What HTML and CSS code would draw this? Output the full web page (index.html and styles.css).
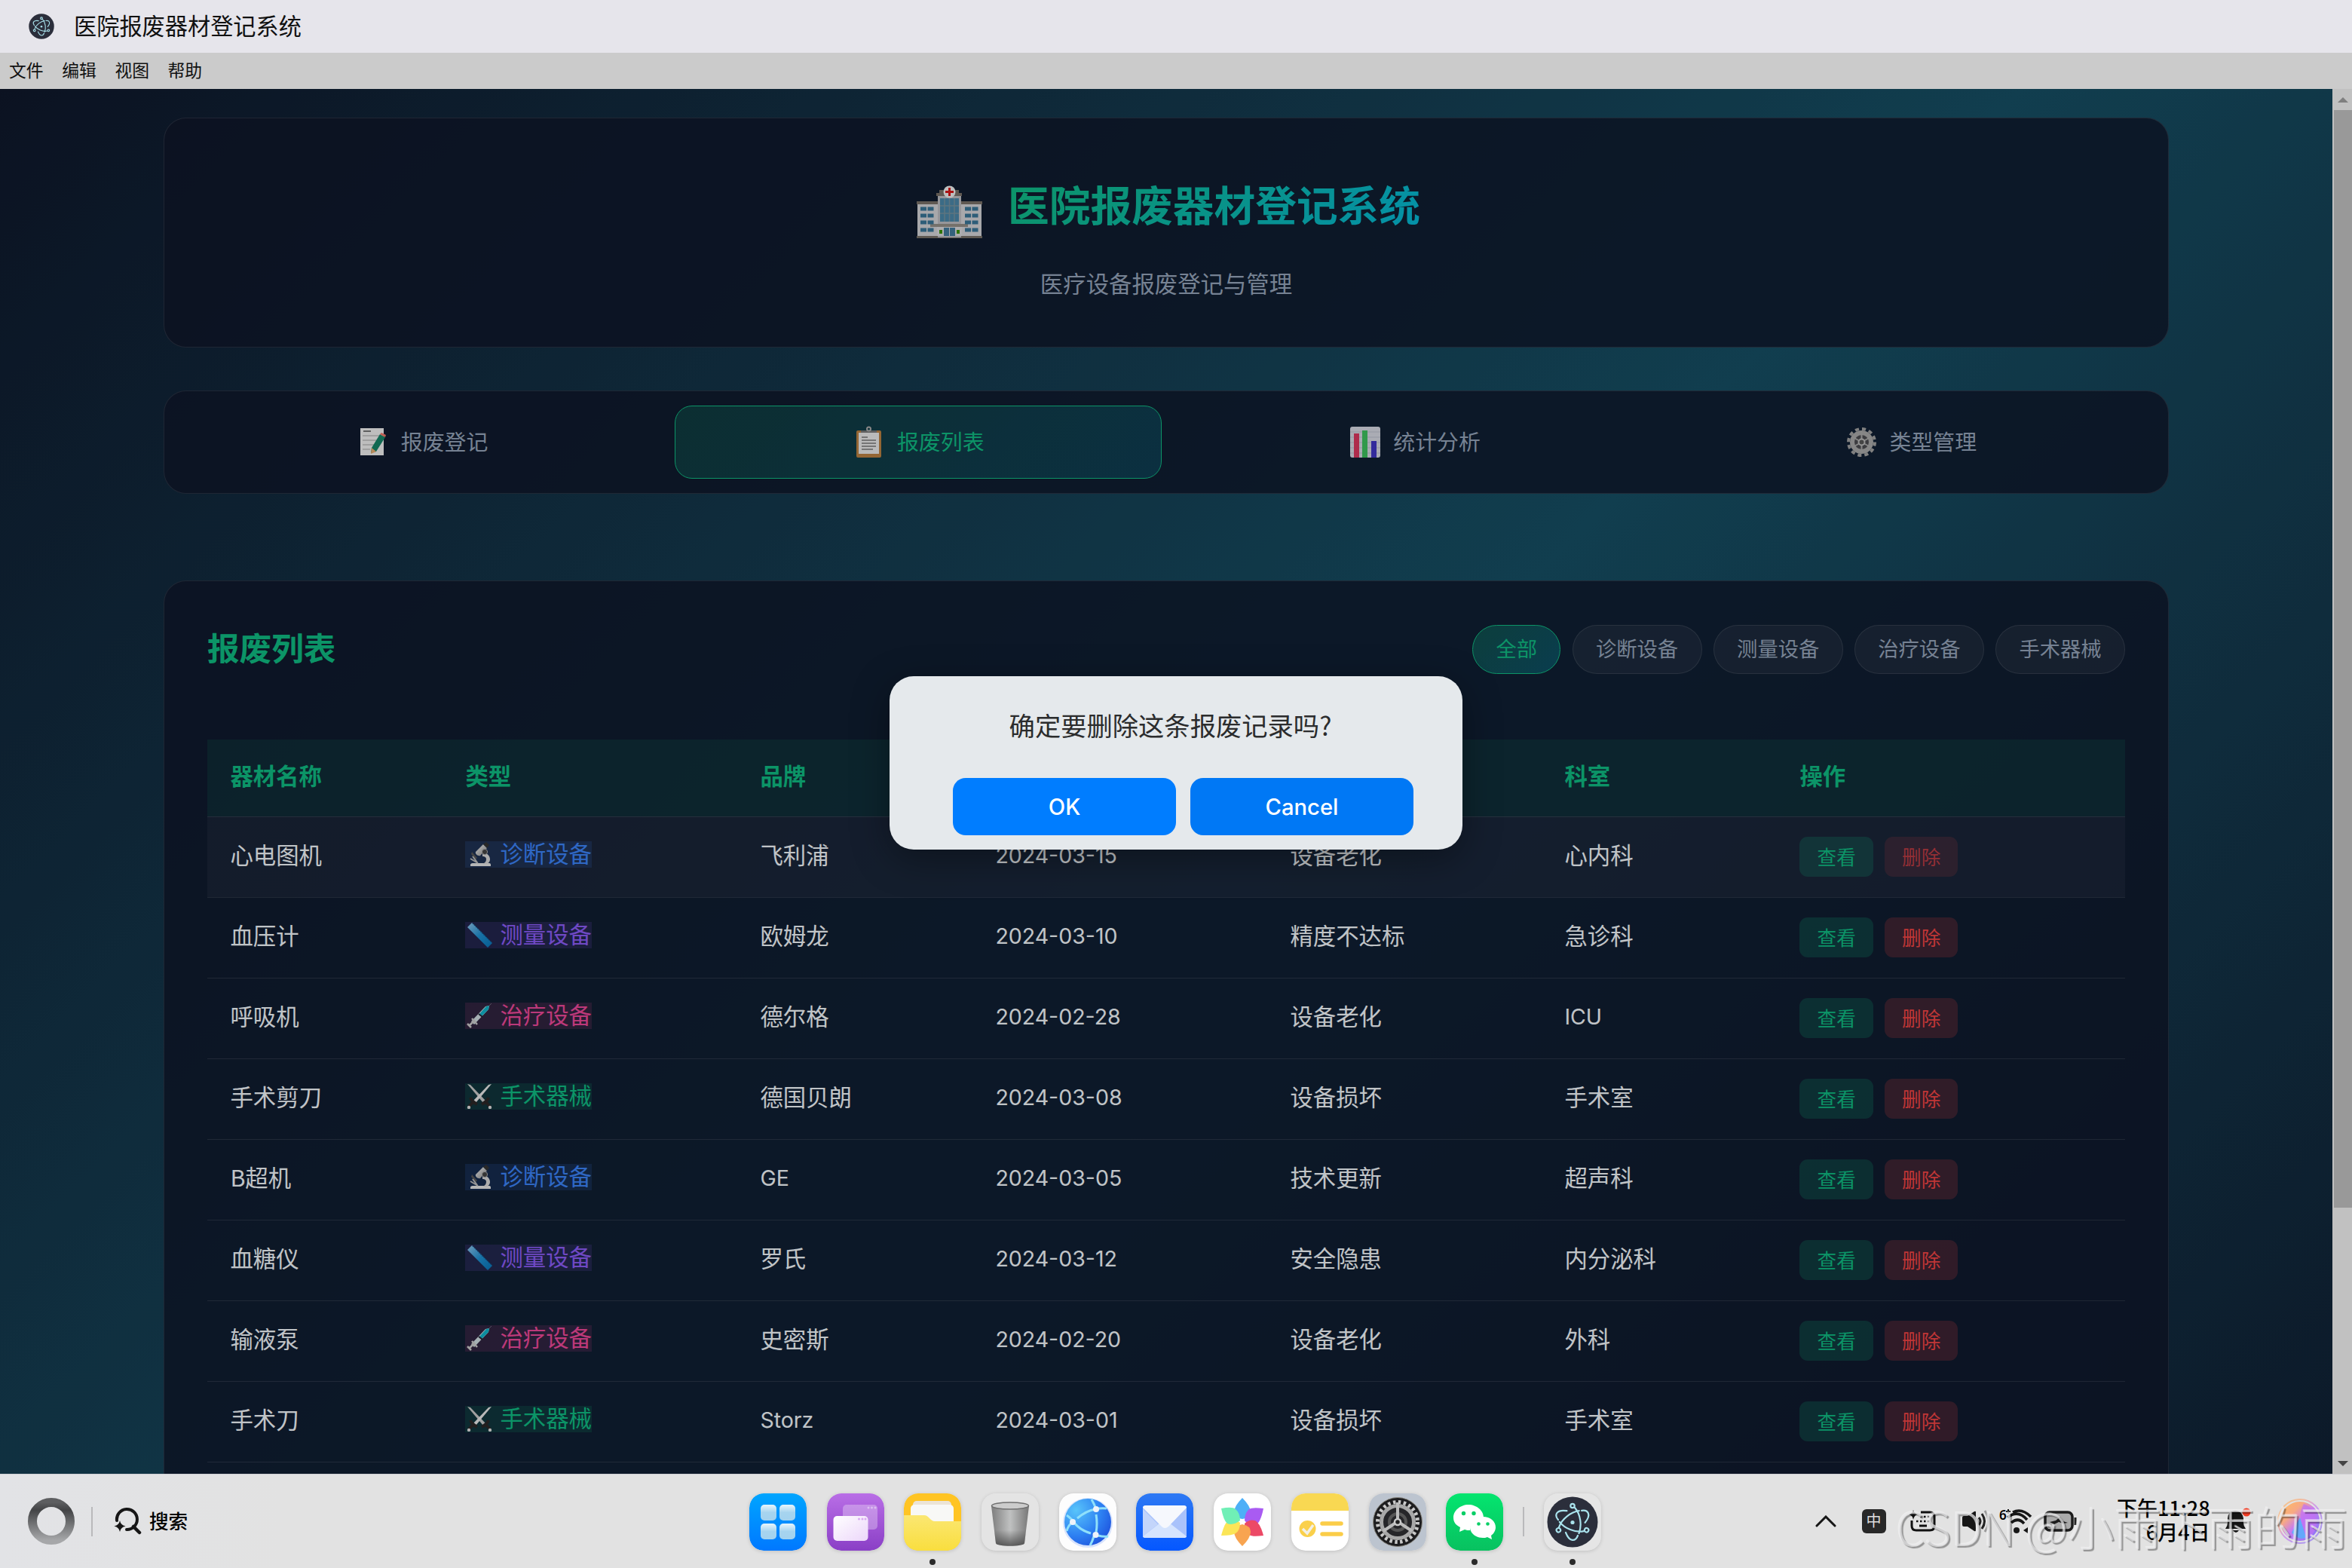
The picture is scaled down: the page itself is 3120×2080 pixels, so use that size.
FILE: index.html
```html
<!DOCTYPE html>
<html lang="zh-CN">
<head>
  <meta charset="UTF-8">
  <title>医院报废器材登记系统</title>
  <link rel="stylesheet" href="styles.css">
</head>
<body>
  <!-- shared icons -->
  <svg class="sprite" width="0" height="0">
    <defs>
      <linearGradient id="g-metal" x1="0" y1="0" x2="1" y2="1"><stop offset="0" stop-color="#f4f4f4"/><stop offset="1" stop-color="#8d8d8d"/></linearGradient>
      <linearGradient id="g-ruler" x1="0" y1="0" x2="1" y2="1"><stop offset="0" stop-color="#8fc4ea"/><stop offset=".5" stop-color="#1f8fd0"/><stop offset="1" stop-color="#0873b5"/></linearGradient>
    </defs>
    <symbol id="i-scope" viewBox="0 0 34 34">
      <path d="M5 33h27v-2c0-1.500-1-2-3-2H8c-2 0-3 1-3 2z" fill="#e4e4e4"/>
      <path d="M21 15c6 0 10 4 10 9 0 3-2 5-4 6h-6c3-1 5-3 5-6s-2-4-5-4z" fill="#d8d8d8"/>
      <path d="M12 14l10-10 5 5-9 10c-3 1-7-2-6-5z" fill="url(#g-metal)"/>
      <path d="M22 4l4-3 4 4-3 4z" fill="#333"/>
      <circle cx="24" cy="14" r="3.600" fill="#444" stroke="#aaa"/>
      <path d="M7 14l7 8-2 2-6-7z" fill="#555"/><path d="M5 23l10 6M8 20l6 8" stroke="#bbb" stroke-width="2"/>
    </symbol>
    <symbol id="i-ruler" viewBox="0 0 34 34">
      <path d="M1 7l6-6 27 27-6 6z" fill="url(#g-ruler)"/>
      <path d="M8 2l25 25" stroke="#0a4d80" stroke-width="1.500" stroke-dasharray="1 2"/>
    </symbol>
    <symbol id="i-syringe" viewBox="0 0 34 34">
      <path d="M27 7l6-6" stroke="#667" stroke-width="1"/>
      <path d="M6 25L25 5l5-1-1 5L10 29z" fill="#cfdde0"/>
      <path d="M17 15L26 5l4-1-1 5-9 9z" fill="#10b2c8"/>
      <path d="M16 15l5 4" stroke="#223" stroke-width="2"/>
      <path d="M7 21l7 8M1 28l5 5M4 30l7-7" stroke="#c8c8c8" stroke-width="2.500"/>
    </symbol>
    <symbol id="i-swords" viewBox="0 0 34 34">
      <path d="M1 1l4 1 20 21-3 3z" fill="#c8c8c8"/><path d="M33 1l-4 1L9 23l3 3z" fill="#e6e6e6"/>
      <path d="M20 28c2-1 8-5 9-9M24 23l7 8M14 28c-2-1-8-5-9-9M10 23l-7 8" fill="none" stroke="#2b2626" stroke-width="4"/>
      <circle cx="3" cy="32" r="2.200" fill="#ddd"/><circle cx="31" cy="32" r="2.200" fill="#ddd"/>
    </symbol>
    <symbol id="i-electron" viewBox="0 0 76 76">
      <circle cx="38" cy="38" r="33.500" fill="#2b2e3b"/>
      <g fill="none" stroke="#a9e2ec" stroke-width="2.200" stroke-linecap="round">
        <g id="orbit"><circle cx="38" cy="16.500" r="2.700"/><path d="M41 19C49 28 50.500 43 46.500 53M45 56c-3 8-11 9-16-4"/></g>
        <use href="#orbit" transform="rotate(120 38 38)"/><use href="#orbit" transform="rotate(240 38 38)"/>
      </g>
      <circle cx="38" cy="38.500" r="2.600" fill="#a9e2ec"/>
    </symbol>
  </svg>

  <header class="titlebar">
    <svg class="title-icon"><use href="#i-electron"/></svg>
    <span>医院报废器材登记系统</span>
  </header>
  <nav class="menubar"><span>文件</span><span>编辑</span><span>视图</span><span>帮助</span></nav>

  <div class="window">
    <div class="viewport">
      <div class="page">
        <div class="container">
          <section class="card hero">
            <div class="hero-title">
              <svg class="hospital" viewBox="0 0 98 70">
                <path d="M7 23h27v46H7zM65 23h27v46H65z" fill="#d3d3d6"/>
                <path d="M6 21h28v4H6zM65 21h28v4H65zM6 67h87v3H6z" fill="#777067"/>
                <path d="M34 13h31v56H34z" fill="#bcbcc1"/><path d="M32 10h34v4H32zM36 6h26v4H36z" fill="#776e66"/>
                <path d="M37 17h25v31H37z" fill="#4a86a8"/><path d="M43 17v31M49.500 17v31M56 17v31M37 27h25M37 37h25" stroke="#75929f" stroke-width="1.500"/>
                <path d="M24 51h50v4H24z" fill="#938e86"/><path d="M33 55h33v12H33z" fill="#d9d9db"/>
                <path d="M42 56h7v11h-7zM50 56h7v11h-7z" fill="#417b9d"/>
                <path d="M36 59h4v5h-4zM59 59h4v5h-4z" fill="#3a930a"/>
                <g stroke="#397597" stroke-width="5"><path d="M11 31h8M20.500 31h8M11 40h8M20.500 40h8M11 49h8M20.500 49h8M11 59h8M20.500 59h8"/><path d="M70 31h8M79.500 31h8M70 40h8M79.500 40h8M70 49h8M79.500 49h8M70 59h8M79.500 59h8"/></g>
                <circle cx="49.500" cy="8.500" r="8" fill="#eee"/><path d="M49.500 3v11M44 8.500h11" stroke="#d81818" stroke-width="3"/>
              </svg>
              <h1>医院报废器材登记系统</h1>
            </div>
            <p>医疗设备报废登记与管理</p>
          </section>

          <nav class="card tabs">
            <a class="tab">
              <svg viewBox="0 0 43 43"><path d="M5 3h31v36H5z" fill="#eee"/><path d="M9 7h10" stroke="#777" stroke-width="2"/><path d="M8 13h24M8 19h22M8 25h20M8 31h10" stroke="#bcbcbc" stroke-width="1.500"/><path d="M31 11l7 4-12 19-7 2 1-7z" fill="#168467"/><path d="M31 11l2-2 6 3-1 3z" fill="#ef7668"/><path d="M20 29l6 5-7 3z" fill="#e5aa6e"/></svg>
              <span>报废登记</span>
            </a>
            <a class="tab active">
              <svg viewBox="0 0 43 43"><rect x="5" y="6" width="33" height="36" rx="2" fill="#b98042"/><path d="M8 9h27v28H8z" fill="#e9e9e9"/><path d="M11 9h21V6H11z" fill="#777"/><circle cx="21.500" cy="4" r="2.500" fill="none" stroke="#aaa" stroke-width="2"/><path d="M12 15h8M12 19h19M12 23h19M12 27h19M12 31h15" stroke="#777" stroke-width="1.600"/></svg>
              <span>报废列表</span>
            </a>
            <a class="tab">
              <svg viewBox="0 0 43 43"><rect x="2" y="1" width="40" height="41" rx="3" fill="#d5d8e2"/><path d="M2 8h40M2 15h40M2 22h40M2 29h40M2 36h40" stroke="#b9bdcb"/><path d="M7 10h7v32H7z" fill="#da375f"/><path d="M18 6h7v36h-7z" fill="#3ec05e"/><path d="M30 20h7v22h-7z" fill="#4036c4"/></svg>
              <span>统计分析</span>
            </a>
            <a class="tab">
              <svg viewBox="0 0 43 43"><circle cx="21.500" cy="21.500" r="17.500" fill="none" stroke="#a0a0a0" stroke-width="4" stroke-dasharray="5.100 4.060"/><circle cx="21.500" cy="21.500" r="12.500" fill="#4c4c50" stroke="#a8a8a8" stroke-width="6"/><path d="M21.500 9v25M10 15l23 13M33 15L10 28" stroke="#aaa" stroke-width="2"/><circle cx="21.500" cy="21.500" r="4" fill="#555" stroke="#bbb" stroke-width="2"/></svg>
              <span>类型管理</span>
            </a>
          </nav>

          <section class="card list">
            <div class="list-head">
              <h2>报废列表</h2>
              <div class="filters">
                <button class="filter on">全部</button>
                <button class="filter">诊断设备</button>
                <button class="filter">测量设备</button>
                <button class="filter">治疗设备</button>
                <button class="filter">手术器械</button>
              </div>
            </div>
            <table>
              <colgroup><col class="c1"><col class="c2"><col class="c1"><col class="c2"><col class="c3"><col class="c1"><col></colgroup>
              <thead>
                <tr><th>器材名称</th><th>类型</th><th>品牌</th><th>报废日期</th><th>报废原因</th><th>科室</th><th>操作</th></tr>
              </thead>
              <tbody>
                <tr class="hover"><td>心电图机</td><td><span class="tag diag"><svg><use href="#i-scope"/></svg>诊断设备</span></td><td>飞利浦</td><td class="en">2024-03-15</td><td>设备老化</td><td>心内科</td><td><div class="acts"><button class="view">查看</button><button class="del">删除</button></div></td></tr>
                <tr><td>血压计</td><td><span class="tag meas"><svg><use href="#i-ruler"/></svg>测量设备</span></td><td>欧姆龙</td><td class="en">2024-03-10</td><td>精度不达标</td><td>急诊科</td><td><div class="acts"><button class="view">查看</button><button class="del">删除</button></div></td></tr>
                <tr><td>呼吸机</td><td><span class="tag cure"><svg><use href="#i-syringe"/></svg>治疗设备</span></td><td>德尔格</td><td class="en">2024-02-28</td><td>设备老化</td><td class="en">ICU</td><td><div class="acts"><button class="view">查看</button><button class="del">删除</button></div></td></tr>
                <tr><td>手术剪刀</td><td><span class="tag surg"><svg><use href="#i-swords"/></svg>手术器械</span></td><td>德国贝朗</td><td class="en">2024-03-08</td><td>设备损坏</td><td>手术室</td><td><div class="acts"><button class="view">查看</button><button class="del">删除</button></div></td></tr>
                <tr><td>B超机</td><td><span class="tag diag"><svg><use href="#i-scope"/></svg>诊断设备</span></td><td class="en">GE</td><td class="en">2024-03-05</td><td>技术更新</td><td>超声科</td><td><div class="acts"><button class="view">查看</button><button class="del">删除</button></div></td></tr>
                <tr><td>血糖仪</td><td><span class="tag meas"><svg><use href="#i-ruler"/></svg>测量设备</span></td><td>罗氏</td><td class="en">2024-03-12</td><td>安全隐患</td><td>内分泌科</td><td><div class="acts"><button class="view">查看</button><button class="del">删除</button></div></td></tr>
                <tr><td>输液泵</td><td><span class="tag cure"><svg><use href="#i-syringe"/></svg>治疗设备</span></td><td>史密斯</td><td class="en">2024-02-20</td><td>设备老化</td><td>外科</td><td><div class="acts"><button class="view">查看</button><button class="del">删除</button></div></td></tr>
                <tr><td>手术刀</td><td><span class="tag surg"><svg><use href="#i-swords"/></svg>手术器械</span></td><td class="en">Storz</td><td class="en">2024-03-01</td><td>设备损坏</td><td>手术室</td><td><div class="acts"><button class="view">查看</button><button class="del">删除</button></div></td></tr>
              </tbody>
            </table>
          </section>
        </div>
      </div>
      <div class="mask"></div>
    </div>
    <div class="scrollbar">
      <div class="arrow"><svg width="14" height="7"><path d="M7 0l7 7H0z" fill="#7f7f7f"/></svg></div>
      <div class="thumb"></div>
      <div class="arrow"><svg width="14" height="7"><path d="M7 7L0 0h14z" fill="#444"/></svg></div>
    </div>

    <div class="dialog">
      <p>确定要删除这条报废记录吗?</p>
      <div class="dialog-btns"><button>OK</button><button class="cancel">Cancel</button></div>
    </div>
  </div>

  <footer class="taskbar">
    <div class="start">
      <svg width="62" height="62" viewBox="0 0 62 62"><defs><linearGradient id="g-ring" x1="0" y1="0" x2="0" y2="1"><stop offset="0" stop-color="#5d5e60"/><stop offset=".2" stop-color="#434446"/><stop offset="1" stop-color="#a6a7a9"/></linearGradient></defs><circle cx="31" cy="31" r="25" fill="none" stroke="url(#g-ring)" stroke-width="12"/></svg>
      <i class="sep"></i>
      <svg class="search-icon" width="37" height="37" viewBox="0 0 37 37"><path d="M4 17A13.500 13.500 0 1 1 17 29" fill="none" stroke="#161616" stroke-width="4" stroke-linecap="round"/><path d="M26 25l8 8" stroke="#161616" stroke-width="4.500" stroke-linecap="round"/><path d="M8 17q1 6 7.500 7.500Q9 26 8 32 7 26 .5 24.500 7 23 8 17z" fill="#161616"/></svg>
      <span>搜索</span>
    </div>

    <div class="dock">
      <div class="app"><svg viewBox="0 0 76 76"><defs><linearGradient id="d1" x1="0" y1="0" x2="0" y2="1"><stop offset="0" stop-color="#00a5ff"/><stop offset="1" stop-color="#0078ff"/></linearGradient><linearGradient id="d1b" x1="0" y1="0" x2="0" y2="1"><stop offset="0" stop-color="#e8f5fc"/><stop offset=".5" stop-color="#a6d4ef"/><stop offset="1" stop-color="#a3d2ef"/></linearGradient></defs><rect width="76" height="76" rx="19" fill="url(#d1)"/><g fill="url(#d1b)"><rect x="15" y="15" width="21" height="21" rx="5"/><rect x="40" y="15" width="21" height="21" rx="5"/><rect x="15" y="40" width="21" height="21" rx="5"/><rect x="40" y="40" width="21" height="21" rx="5"/></g></svg></div>
      <div class="app"><svg viewBox="0 0 76 76"><defs><linearGradient id="d2" x1="0" y1="0" x2="0" y2="1"><stop offset="0" stop-color="#b96ee6"/><stop offset="1" stop-color="#8a3fc6"/></linearGradient><linearGradient id="d2b" x1="0" y1="0" x2="1" y2="1"><stop offset="0" stop-color="#fff"/><stop offset="1" stop-color="#ecd6fa"/></linearGradient></defs><rect width="76" height="76" rx="19" fill="url(#d2)"/><rect x="21" y="15" width="46" height="33" rx="5" fill="#fff" opacity=".3"/><g fill="#fff" opacity=".4"><circle cx="55" cy="19" r="1.500"/><circle cx="59.500" cy="19" r="1.500"/><circle cx="64" cy="19" r="1.500"/></g><rect x="8.500" y="30" width="46" height="33" rx="5" fill="url(#d2b)"/><g fill="#d9a8f2"><circle cx="42.500" cy="34" r="1.500"/><circle cx="47" cy="34" r="1.500"/><circle cx="51" cy="34" r="1.500"/></g></svg></div>
      <div class="app run"><svg viewBox="0 0 76 76"><defs><clipPath id="cf"><rect width="76" height="76" rx="19"/></clipPath><linearGradient id="d3" x1="0" y1="0" x2="0" y2="1"><stop offset="0" stop-color="#fbe772"/><stop offset="1" stop-color="#f9de3e"/></linearGradient></defs><g clip-path="url(#cf)"><path d="M0 0h76v76H0z" fill="#ffc423"/><rect x="12" y="10" width="51" height="20" rx="5" fill="#ece4d6"/><rect x="9" y="15" width="57" height="40" rx="5" fill="#f8f8f6"/><path d="M0 29h27c6 0 8 8 14 8h35v39H0z" fill="url(#d3)"/></g></svg></div>
      <div class="app"><svg viewBox="0 0 76 76"><defs><linearGradient id="d4"><stop offset="0" stop-color="#7d7d7d"/><stop offset=".5" stop-color="#c0c1c1"/><stop offset="1" stop-color="#777"/></linearGradient><linearGradient id="d4b" x1="0" y1="0" x2="0" y2="1"><stop offset=".6" stop-color="#444" stop-opacity="0"/><stop offset="1" stop-color="#444" stop-opacity=".8"/></linearGradient></defs><rect width="76" height="76" rx="19" fill="#e4e4e4"/><path d="M13 17h50l-6 49c-1 5-37 5-38 0z" fill="url(#d4)"/><path d="M13 17h50l-6 49c-1 5-37 5-38 0z" fill="url(#d4b)"/><ellipse cx="38" cy="16.500" rx="24.500" ry="4.500" fill="#ccc" stroke="#707070" stroke-width="1.500"/></svg></div>
      <div class="app"><svg viewBox="0 0 76 76"><defs><radialGradient id="d5" cx=".25" cy=".25" r=".9"><stop offset="0" stop-color="#58c4fa"/><stop offset=".6" stop-color="#2d80f2"/><stop offset="1" stop-color="#1e51dc"/></radialGradient></defs><rect width="76" height="76" rx="19" fill="#fdfdfd"/><circle cx="38" cy="39" r="33" fill="#6c96fa" opacity=".25"/><circle cx="38" cy="38" r="31" fill="url(#d5)"/><g fill="none" stroke="#8fe0fb" stroke-width="3"><path d="M43 8q4 7 6 13M24 33q12-10 24-12 7-2 15-1M10 50q2-8 8-12M20 39q8 10 22 14M49 28q2 12 0 24M52 56q7 2 13 1M46 57q-2 7-5 12M18 36q-5-5-8-7"/></g><g fill="#eef3fa"><circle cx="49" cy="21" r="4"/><circle cx="18" cy="38" r="4"/><circle cx="48.500" cy="55" r="4"/></g></svg></div>
      <div class="app"><svg viewBox="0 0 76 76"><defs><linearGradient id="d6" x1="0" y1="0" x2="0" y2="1"><stop offset="0" stop-color="#2e79f3"/><stop offset="1" stop-color="#0457ff"/></linearGradient></defs><rect width="76" height="76" rx="19" fill="url(#d6)"/><rect x="9" y="16" width="58" height="43" rx="4" fill="#a9c2fb"/><path d="M9 57l23-18h12l23 18q0 2-4 2H13q-4 0-4-2z" fill="#d5e4fe"/><path d="M9 21l20 20L9 57z" fill="#c3d5fb"/><path d="M9 19q0-3 4-3h50q4 0 4 3L43 44q-5 4-9 0z" fill="#f6f8fd"/></svg></div>
      <div class="app"><svg viewBox="0 0 76 76"><rect width="76" height="76" rx="19" fill="#fff"/><g opacity=".85"><path d="M38 6q11 11 11 19 0 8-11 9-11-1-11-9 0-8 11-19z" fill="#2ea2f6"/><path d="M66 20q-4 20-11 22-8 2-14-6 0-10 6-15 4-3 19-1z" fill="#9b3ff0"/><path d="M66 56q-4-16-11-20-8-2-14 4 0 10 6 15 4 3 19 1z" fill="#e92a4c"/><path d="M38 70q-11-11-11-19 0-8 11-10 11 2 11 10 0 8-11 19z" fill="#f79532"/><path d="M10 56q4-16 9-20 8-4 16 3 0 10-6 14-4 3-19 3z" fill="#fbe13a"/><path d="M10 20q3 16 8 20 8 3 17-4 0-10-6-15-4-4-19-1z" fill="#58edaa"/></g></svg></div>
      <div class="app"><svg viewBox="0 0 76 76"><rect width="76" height="76" rx="19" fill="#fff"/><path d="M0 23v-4Q0 0 19 0h38q19 0 19 19v4z" fill="#f9d852"/><circle cx="21.500" cy="47" r="11" fill="#fad04b"/><path d="M15 47l6 6 8-11" fill="none" stroke="#f1efe6" stroke-width="3.500"/><path d="M41 40h25M41 54h25" stroke="#fbcd48" stroke-width="5.500" stroke-linecap="round"/></svg></div>
      <div class="app"><svg viewBox="0 0 76 76"><rect width="76" height="76" rx="19" fill="#bcc4cf"/><circle cx="38" cy="38" r="32.500" fill="#1d1d1f" stroke="#8d8b84" stroke-width="1"/><circle cx="38" cy="38" r="26.500" fill="none" stroke="#c9c9c9" stroke-width="5" stroke-dasharray="3.470 3.470"/><circle cx="38" cy="38" r="21.500" fill="#262629" stroke="#a8a8a8" stroke-width="5"/><circle cx="38" cy="38" r="11" fill="none" stroke="#555" stroke-width="4"/><path d="M38 33V12M34 40L19 50M42 40l15 10" stroke="#bbb" stroke-width="4"/><circle cx="38" cy="38" r="4" fill="#222" stroke="#ccc" stroke-width="2.500"/></svg></div>
      <div class="app run"><svg viewBox="0 0 76 76"><defs><linearGradient id="d10" x1="0" y1="0" x2="0" y2="1"><stop offset="0" stop-color="#04e56f"/><stop offset="1" stop-color="#08c160"/></linearGradient></defs><rect width="76" height="76" rx="19" fill="url(#d10)"/><path d="M30 15c11 0 20 8 20 17-10 0-18 7-18 16v1c-2 0-5 0-7-1l-7 3 1-6c-6-3-9-7-9-13 0-9 9-17 20-17z" fill="#fff"/><path d="M49 31c10 0 17 6 17 14 0 4-2 8-6 11l1 5-6-3c-2 1-4 1-6 1-9 0-17-6-17-14s8-14 17-14z" fill="#fff"/><g fill="#07cf66"><circle cx="23.500" cy="26.500" r="2.700"/><circle cx="37" cy="26.500" r="2.700"/><circle cx="43.500" cy="40.500" r="2.300"/><circle cx="55.500" cy="40.500" r="2.300"/></g></svg></div>
      <i class="sep"></i>
      <div class="app run"><svg viewBox="0 0 76 76"><rect width="76" height="76" rx="19" fill="#e5e5e5"/><use href="#i-electron"/></svg></div>
    </div>

    <div class="tray">
      <svg class="chev" width="28" height="16" viewBox="0 0 28 16"><path d="M2 14L14 2l12 12" fill="none" stroke="#161616" stroke-width="3" stroke-linecap="round"/></svg>
      <span class="ime">中</span>
      <svg class="kbd" width="36" height="30" viewBox="0 0 36 30"><path d="M15 3h12q6 0 6 6v12q0 6-6 6H9q-6 0-6-6v-7" fill="none" stroke="#111" stroke-width="3"/><path d="M5 0q1 5 6 6-5 1-6 7Q4 7-1 6 4 5 5 0z" fill="#111"/><path d="M14 9h14M9 15h18" stroke="#111" stroke-width="2.500" stroke-dasharray="2.500 2.500"/><path d="M13 21h10" stroke="#111" stroke-width="3"/></svg>
      <svg class="vol" width="38" height="30" viewBox="0 0 38 30"><path d="M0 10q0-2 2-2h5l9-6q2-1 2 1v24q0 2-2 1l-9-6H2q-2 0-2-2z" fill="#161616"/><path d="M22 10q4 5 0 10M26 5q7 10 0 20" fill="none" stroke="#222" stroke-width="3"/><path d="M30 1q9 14 0 28" fill="none" stroke="#999" stroke-width="3"/></svg>
      <svg class="wifi" width="46" height="34" viewBox="0 0 46 34"><g fill="none" stroke="#161616" stroke-width="3.600"><path d="M19 5q12-6 24 6M12 12q14-11 26 3M17 19q9-8 17 1"/></g><circle cx="24" cy="29" r="4" fill="#161616"/><path d="M33 29l6-4v8z" fill="#161616"/><text x="1" y="15" font-size="17" font-weight="600">6</text><path d="M10 4h6M13 1v6" stroke="#161616" stroke-width="2"/></svg>
      <svg class="bat" width="46" height="28" viewBox="0 0 46 28"><rect x="2" y="2" width="36" height="24" rx="6" fill="#aaa" stroke="#1c1c1c" stroke-width="3.500"/><path d="M42 9v10" stroke="#222" stroke-width="3"/><path d="M8 15l8-2 6-5 4 6 6 2-6 1-6-2-6 3z" fill="#1c1c1c"/></svg>
      <div class="clock"><div>下午11:28</div><div>6月4日</div></div>
      <svg class="bell" width="36" height="36" viewBox="0 0 36 36"><path d="M1 28q3-4 3-8V14Q5 4 14 4t11 10v6q0 4 3 8zM11 30h8q-4 6-8 0z" fill="#161616"/><circle cx="29" cy="6" r="5.500" fill="#f03c24"/></svg>
      <svg width="62" height="62" viewBox="0 0 62 62"><defs><linearGradient id="g-orb" x1="0" y1="0" x2="1" y2="1"><stop offset="0" stop-color="#ffbe5c"/><stop offset=".3" stop-color="#f7a984"/><stop offset=".5" stop-color="#c77df0"/><stop offset="1" stop-color="#7d74f6"/></linearGradient></defs><circle cx="31" cy="31" r="29" fill="none" stroke="url(#g-orb)" stroke-width="2" opacity=".7"/><circle cx="31" cy="31" r="26" fill="url(#g-orb)"/><path d="M31 26L20 46q11 12 19 6z" fill="#63a8fb"/><path d="M36 8q-6 12-4 20t8 26q14-8 13-24T36 8z" fill="#c070f4" opacity=".7"/></svg>
    </div>
  </footer>
  <div class="watermark">CSDN @小雨下雨的雨</div>
</body>
</html>
```
FILE: styles.css
```css
* { box-sizing: border-box; margin: 0; padding: 0; }
body {
  width: 3120px;
  height: 2080px;
  overflow: hidden;
  display: flex;
  flex-direction: column;
  position: relative;
  font-family: "Noto Sans CJK SC", sans-serif;
  font-size: 30.4px;
  color: #111;
}
button { font: inherit; border: 0; }
svg { display: block; flex: none; }
.sprite { position: absolute; }

.titlebar {
  height: 70px;
  flex: none;
  display: flex;
  align-items: center;
  gap: 24px;
  padding: 0 0 5px 36px;
  background: #e6e5eb;
  font-size: 30.2px;
}
.title-icon { width: 38px; height: 38px; margin-top: 5px; }
.menubar {
  height: 48px;
  flex: none;
  display: flex;
  align-items: center;
  gap: 24.6px;
  padding: 0 0 4px 12px;
  background: #cbcbcb;
  font-size: 22.8px;
}

.window { height: 1837px; flex: none; display: flex; position: relative; }
.viewport { width: 3094px; overflow: hidden; position: relative; }
.page {
  height: 2270px;
  padding-top: 38px;
  background: linear-gradient(135deg, #0f172a 0%, #164e63 50%, #0f172a 100%);
}
.mask { position: absolute; inset: 0; background: rgba(0, 0, 0, .2); }
.container {
  width: 2660px;
  height: 2200px;
  margin: 0 auto;
  display: flex;
  flex-direction: column;
}
.card {
  background: rgba(15, 23, 42, .84);
  border: 1px solid rgba(255, 255, 255, .1);
  border-radius: 30px;
}

.hero { height: 305px; padding-top: 57px; text-align: center; }
.hero-title {
  height: 116px;
  display: flex;
  align-items: center;
  justify-content: center;
  gap: 29px;
}
.hospital { width: 98px; height: 70px; margin-top: 18px; }
h1 {
  margin-top: -5px;
  font-size: 54.7px;
  font-weight: 700;
  line-height: 80px;
  background: linear-gradient(135deg, #10b981, #06b6d4);
  -webkit-background-clip: text;
  background-clip: text;
  color: transparent;
}
.hero p { margin-top: 20px; line-height: 50px; color: #94a3b8; }

.tabs {
  height: 137px;
  margin-top: 57px;
  padding: 19px;
  display: flex;
  gap: 13px;
}
.tab {
  flex: 1;
  display: flex;
  align-items: center;
  justify-content: center;
  gap: 16px;
  padding-left: 1px;
  border: 1px solid transparent;
  border-radius: 23px;
  color: #94a3b8;
  font-size: 28.9px;
}
.tab svg { width: 43px; height: 43px; }
.tab span { margin-top: -6px; }
.tab.active {
  color: #10b981;
  border-color: #10b981;
  background: linear-gradient(135deg, rgba(16, 185, 129, .2), rgba(6, 182, 212, .2));
}

.list { flex: 1; margin-top: 115px; padding: 57px; }
.list-head {
  height: 67px;
  margin-bottom: 86px;
  display: flex;
  align-items: center;
  justify-content: space-between;
}
h2 { font-size: 42.6px; font-weight: 700; color: #10b981; margin-top: -9px; }
.filters { display: flex; gap: 15.2px; }
.filter {
  height: 65px;
  padding: 0 30.4px 5px;
  border: 1px solid rgba(255, 255, 255, .1);
  border-radius: 38px;
  background: rgba(255, 255, 255, .05);
  color: #94a3b8;
  font-size: 27.3px;
}
.filter.on {
  color: #10b981;
  border-color: #10b981;
  background: linear-gradient(135deg, rgba(16, 185, 129, .3), rgba(6, 182, 212, .3));
}

table { width: 2544px; table-layout: fixed; border-collapse: collapse; }
.c1 { width: 312px; }
.c2 { width: 391px; }
.c3 { width: 364px; }
th, td {
  height: 107px;
  padding: 0 30.4px 7px;
  text-align: left;
  color: #f1f5f9;
  border-bottom: 1px solid rgba(255, 255, 255, .1);
}
th { height: 102px; background: rgba(16, 185, 129, .1); color: #10b981; font-weight: 600; }
td:last-child { padding-bottom: 0; }
.hover { background: rgba(255, 255, 255, .04); }
.en { padding-bottom: 5px; font-family: Inter, "Noto Sans CJK SC", sans-serif; font-size: 28.500px; }
.tag {
  display: inline-flex;
  align-items: flex-start;
  height: 35px;
  margin-bottom: 5px;
  line-height: 31px;
  vertical-align: middle;
}
.tag svg { width: 34px; height: 34px; margin: 0 10px 0 2px; }
.diag { color: #3b82f6; background: rgba(59, 130, 246, .15); }
.meas { color: #8b5cf6; background: rgba(139, 92, 246, .15); }
.cure { color: #ec4899; background: rgba(236, 72, 153, .15); }
.surg { color: #10b981; background: rgba(16, 185, 129, .15); }
.acts { display: flex; gap: 15px; }
.acts button { width: 97.500px; height: 53px; padding-bottom: 3px; border-radius: 11px; font-size: 25.600px; }
.view { color: #10b981; background: rgba(16, 185, 129, .2); }
.del { color: #ef4444; background: rgba(239, 68, 68, .2); }
.hover .del { color: #b83b43; background: rgba(239, 68, 68, .14); }

.scrollbar {
  width: 26px;
  padding-left: 2px;
  background: #c1c1c1;
  display: flex;
  flex-direction: column;
}
.arrow { height: 28px; display: flex; align-items: center; justify-content: center; }
.thumb { height: 1456px; background: #999; margin-bottom: auto; }

.dialog {
  position: absolute;
  left: 1180px;
  top: 779px;
  width: 760px;
  height: 230px;
  padding-top: 35px;
  border-radius: 32px;
  background: #e5e9ec;
  box-shadow: 0 12px 50px rgba(0, 0, 0, .35);
}
.dialog p { width: 745px; line-height: 58px; text-align: center; font-size: 34.3px; color: #2b2c2d; }
.dialog-btns { display: flex; gap: 19px; padding: 42px 0 0 84px; }
.dialog-btns button {
  width: 296px;
  height: 76px;
  border-radius: 17px;
  background: #007dff;
  color: #fff;
  font-family: Inter, sans-serif;
  font-size: 29.200px;
  font-weight: 500;
}
.dialog-btns .cancel { background: #0078f5; }

.taskbar {
  height: 125px;
  flex: none;
  display: flex;
  position: relative;
  background: linear-gradient(90deg, #e2e3e6, #e2e2e2 12%, #e2e2e2);
  border-top: 1px solid #cfcfd4;
}
.sep { width: 2px; height: 39px; background: #b9b9bb; }
.start { display: flex; align-items: center; width: 994px; padding-left: 37px; font-size: 25.600px; font-weight: 500; color: #000; }
.start .sep { margin: 0 28px 0 22px; }
.start span { margin: -3px 0 0 10px; }
.dock { display: flex; align-items: flex-start; gap: 26.7px; padding-top: 25px; }
.app { width: 76px; display: flex; flex-direction: column; align-items: center; }
.app svg { width: 76px; height: 76px; border-radius: 19px; box-shadow: 0 1px 5px rgba(0, 0, 0, .15); }
.app.run::after { content: ""; width: 8px; height: 8px; margin-top: 11px; border-radius: 50%; background: #2b2b2b; }
.dock .sep { margin: 18px -1px 0 -1px; }
.tray { flex: 1; display: flex; align-items: center; padding-left: 284px; }
.ime {
  width: 32px;
  height: 32px;
  margin: 0 31px 0 34px;
  border-radius: 6px;
  background: #282828;
  color: #ddd;
  font-size: 20px;
  line-height: 30px;
  text-align: center;
}
.vol { margin-left: 34px; }
.wifi { margin: 0 14px 0 10px; font-family: "Noto Sans", sans-serif; overflow: visible; }
.clock { width: 175px; text-align: right; font-size: 27px; font-weight: 500; line-height: 32px; color: #000; margin-top: -4px; white-space: nowrap; }
.bell { margin: 0 33px 0 19px; }
.watermark {
  position: absolute;
  left: 2515px;
  top: 1980px;
  font-size: 61.800px;
  font-weight: 300;
  line-height: 88px;
  white-space: nowrap;
  color: rgba(232, 232, 234, .65);
  text-shadow: 2px 2px 1px rgba(0, 0, 0, .35), -1px -1px 0 rgba(255, 255, 255, .4);
}
```
